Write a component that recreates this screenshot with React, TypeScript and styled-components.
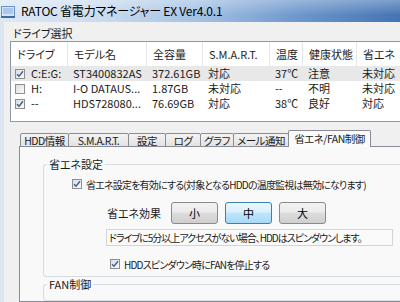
import React from 'react'
import styled, { createGlobalStyle, css } from 'styled-components'

const GlobalStyle = createGlobalStyle`
  html, body {
    margin: 0;
    padding: 0;
  }
  body {
    width: 400px;
    height: 302px;
    overflow: hidden;
    background: #f0f0f0;
    font-family: 'Noto Sans CJK JP', 'Noto Sans', sans-serif;
    font-size: 11px;
    font-feature-settings: 'palt';
    color: #1a1a1a;
  }
`

const Window = styled.div`
  display: flex;
  flex-direction: column;
  width: 400px;
  height: 302px;
  overflow: hidden;
`

const TitleBar = styled.div`
  flex: none;
  height: 22px;
  display: flex;
  align-items: center;
  gap: 4px;
  padding-left: 1px;
  background: linear-gradient(180deg, rgba(255, 255, 255, 0.3), rgba(255, 255, 255, 0) 70%),
    linear-gradient(90deg, #dde9f6 0%, #cadcf0 25%, #a3c1e4 50%, #6c96cb 75%, #4474b3 100%);
`

const Title = styled.span`
  font-size: 12px;
  letter-spacing: -0.2px;
  line-height: 22px;
  color: #000;
  margin-left: 2px;
`

const Frame = styled.div`
  flex: 1;
  display: flex;
  flex-direction: column;
  border-left: 4px solid #dbe6f2;
  min-height: 0;
`

const SectionLabel = styled.div`
  line-height: 14px;
  padding: 4px 0 0 9px;
`

const ListBox = styled.div`
  margin: 1px 0 0 6px;
  width: 400px;
  height: 79px;
  border: 1px solid #8f98a3;
  background: #fff;
`

const Grid = styled.div<{ $head?: boolean; $selected?: boolean }>`
  display: grid;
  grid-template-columns: 57px 79px 56px 67px 33px 54px 1fr;
  height: ${(p) => (p.$head ? 24 : 15)}px;
  line-height: ${(p) => (p.$head ? 24 : 15)}px;
  background: ${(p) => (p.$selected ? '#e8e8e8' : 'transparent')};
`

const Cell = styled.div<{ $head?: boolean }>`
  display: flex;
  align-items: center;
  gap: 6px;
  padding-left: ${(p) => (p.$head ? 6 : 5)}px;
  white-space: nowrap;
  overflow: hidden;
  ${(p) =>
    p.$head &&
    css`
      border-right: 1px solid #e3e6ea;
      color: #1e1e1e;
    `}
`

const Box = styled.span<{ $inset?: number }>`
  flex: none;
  box-sizing: border-box;
  width: 10px;
  height: 10px;
  margin-left: ${(p) => p.$inset ?? 0}px;
  border: 1px solid #8e8f8f;
  background: linear-gradient(135deg, #dcdcdc, #fbfbfb);
  display: inline-flex;
  align-items: center;
  justify-content: center;
`

const Check = ({ on, inset }: { on: boolean; inset?: number }) => (
  <Box $inset={inset}>
    {on && (
      <svg width="8" height="8" viewBox="0 0 8 8">
        <path d="M1 4.2 L3 6.3 L7 1.2" fill="none" stroke="#3a5f96" strokeWidth="1.4" />
      </svg>
    )}
  </Box>
)

const TabArea = styled.div`
  flex: 1;
  display: flex;
  flex-direction: column;
  margin: 9px 0 0 15px;
  min-height: 0;
`

const TabStrip = styled.div`
  display: flex;
  align-items: flex-end;
  height: 16px;
  padding-left: 1px;
  position: relative;
  z-index: 1;
  margin-bottom: -1px;
`

const Tab = styled.div<{ $w: number; $active?: boolean }>`
  box-sizing: border-box;
  width: ${(p) => p.$w + 1}px;
  margin-right: -1px;
  height: ${(p) => (p.$active ? 17 : 14)}px;
  line-height: ${(p) => (p.$active ? 15 : 13)}px;
  font-size: 10.5px;
  letter-spacing: -0.5px;
  text-align: center;
  border: 1px solid #898c95;
  border-bottom: ${(p) => (p.$active ? 'none' : '1px solid #898c95')};
  border-radius: 2px 2px 0 0;
  white-space: nowrap;
  overflow: hidden;
  background: ${(p) => (p.$active ? '#fbfbfb' : 'linear-gradient(#f3f3f3, #e3e3e3)')};
`

const Panel = styled.div`
  flex: 1;
  width: 400px;
  border: 1px solid #898c95;
  background: #f9f9f9;
  padding-top: 10px;
`

const Group = styled.fieldset`
  margin: 0 0 0 23px;
  padding: 0;
  width: 380px;
  min-width: 0;
  border: 1px solid #d5dce2;
  border-radius: 3px;
`

const Legend = styled.legend`
  margin-left: 3px;
  padding: 0 2px;
  line-height: 14px;
`

const GroupBody = styled.div`
  display: flex;
  flex-direction: column;
  align-items: flex-start;
  padding: 5px 0 4px 28px;
`

const CheckRow = styled.label<{ $indent?: number; $gap?: number }>`
  display: flex;
  align-items: center;
  gap: 4px;
  height: 16px;
  margin: ${(p) => p.$gap ?? 0}px 0 0 ${(p) => p.$indent ?? 0}px;
  font-size: 10px;
  letter-spacing: -0.8px;
  white-space: nowrap;
`

const EffectRow = styled.div`
  display: flex;
  align-items: center;
  gap: 7px;
  margin: 10px 0 0 35px;
`

const EffectLabel = styled.span`
  width: 57px;
`

const Button = styled.div<{ $on?: boolean }>`
  box-sizing: border-box;
  width: 47px;
  height: 22px;
  line-height: 20px;
  text-align: center;
  border-radius: 3px;
  color: #000;
  border: 1px solid ${(p) => (p.$on ? '#3c7fb1' : '#8a8a8a')};
  background: ${(p) =>
    p.$on
      ? 'linear-gradient(#eaf6fd 0%, #d9f0fc 45%, #bee6fd 50%, #a7d9f5 100%)'
      : 'linear-gradient(#f2f2f2 0%, #ebebeb 45%, #dddddd 50%, #cfcfcf 100%)'};
`

const TextBox = styled.div`
  box-sizing: border-box;
  width: 287px;
  height: 17px;
  line-height: 15px;
  margin: 5px 0 0 34px;
  padding-left: 2px;
  border: 1px solid #d2d4d8;
  background: #fafafa;
  font-size: 10px;
  letter-spacing: -1px;
  white-space: nowrap;
  overflow: hidden;
`

const TitleIcon = () => (
  <svg width="14" height="15" viewBox="0 0 14 15">
    <rect x="0.5" y="2.5" width="13" height="10" fill="#d4e5f7" stroke="#6b92c3" />
    <rect x="2" y="4" width="10" height="6" fill="#a9c8ec" />
    <rect x="0" y="12" width="14" height="2" fill="#3f6ba6" />
  </svg>
)

const columns = ['ドライブ', 'モデル名', '全容量', 'S.M.A.R.T.', '温度', '健康状態', '省エネ']

const drives = [
  { on: true, drive: 'C:E:G:', model: 'ST3400832AS', size: '372.61GB', smart: '対応', temp: '37℃', health: '注意', eco: '未対応' },
  { on: false, drive: 'H:', model: 'I-O DATAUS...', size: '1.87GB', smart: '未対応', temp: '--', health: '不明', eco: '未対応' },
  { on: true, drive: '--', model: 'HDS728080...', size: '76.69GB', smart: '対応', temp: '38℃', health: '良好', eco: '対応' },
]

const tabs = [
  { label: 'HDD情報', w: 48 },
  { label: 'S.M.A.R.T.', w: 60 },
  { label: '設定', w: 37 },
  { label: 'ログ', w: 35 },
  { label: 'グラフ', w: 33 },
  { label: 'メール通知', w: 55 },
  { label: '省エネ/FAN制御', w: 82, active: true },
]

export default function App() {
  return (
    <Window>
      <GlobalStyle />
      <TitleBar>
        <TitleIcon />
        <Title>RATOC 省電力マネージャー EX Ver4.0.1</Title>
      </TitleBar>
      <Frame>
        <SectionLabel>ドライブ選択</SectionLabel>
        <ListBox>
          <Grid $head>
            {columns.map((c) => (
              <Cell $head key={c}>
                {c}
              </Cell>
            ))}
          </Grid>
          {drives.map((d, i) => (
            <Grid key={i} $selected={i === 0}>
              <Cell>
                <Check on={d.on} inset={-1} />
                {d.drive}
              </Cell>
              <Cell>{d.model}</Cell>
              <Cell>{d.size}</Cell>
              <Cell>{d.smart}</Cell>
              <Cell>{d.temp}</Cell>
              <Cell>{d.health}</Cell>
              <Cell>{d.eco}</Cell>
            </Grid>
          ))}
        </ListBox>
        <TabArea>
          <TabStrip>
            {tabs.map((t) => (
              <Tab key={t.label} $w={t.w} $active={t.active}>
                {t.label}
              </Tab>
            ))}
          </TabStrip>
          <Panel>
            <Group>
              <Legend>省エネ設定</Legend>
              <GroupBody>
                <CheckRow>
                  <Check on />
                  省エネ設定を有効にする(対象となるHDDの温度監視は無効になります)
                </CheckRow>
                <EffectRow>
                  <EffectLabel>省エネ効果</EffectLabel>
                  <Button>小</Button>
                  <Button $on>中</Button>
                  <Button>大</Button>
                </EffectRow>
                <TextBox>ドライブに5分以上アクセスがない場合、HDDはスピンダウンします。</TextBox>
                <CheckRow $indent={38} $gap={10}>
                  <Check on />
                  HDDスピンダウン時にFANを停止する
                </CheckRow>
              </GroupBody>
            </Group>
            <Group>
              <Legend>FAN制御</Legend>
              <GroupBody />
            </Group>
          </Panel>
        </TabArea>
      </Frame>
    </Window>
  )
}
